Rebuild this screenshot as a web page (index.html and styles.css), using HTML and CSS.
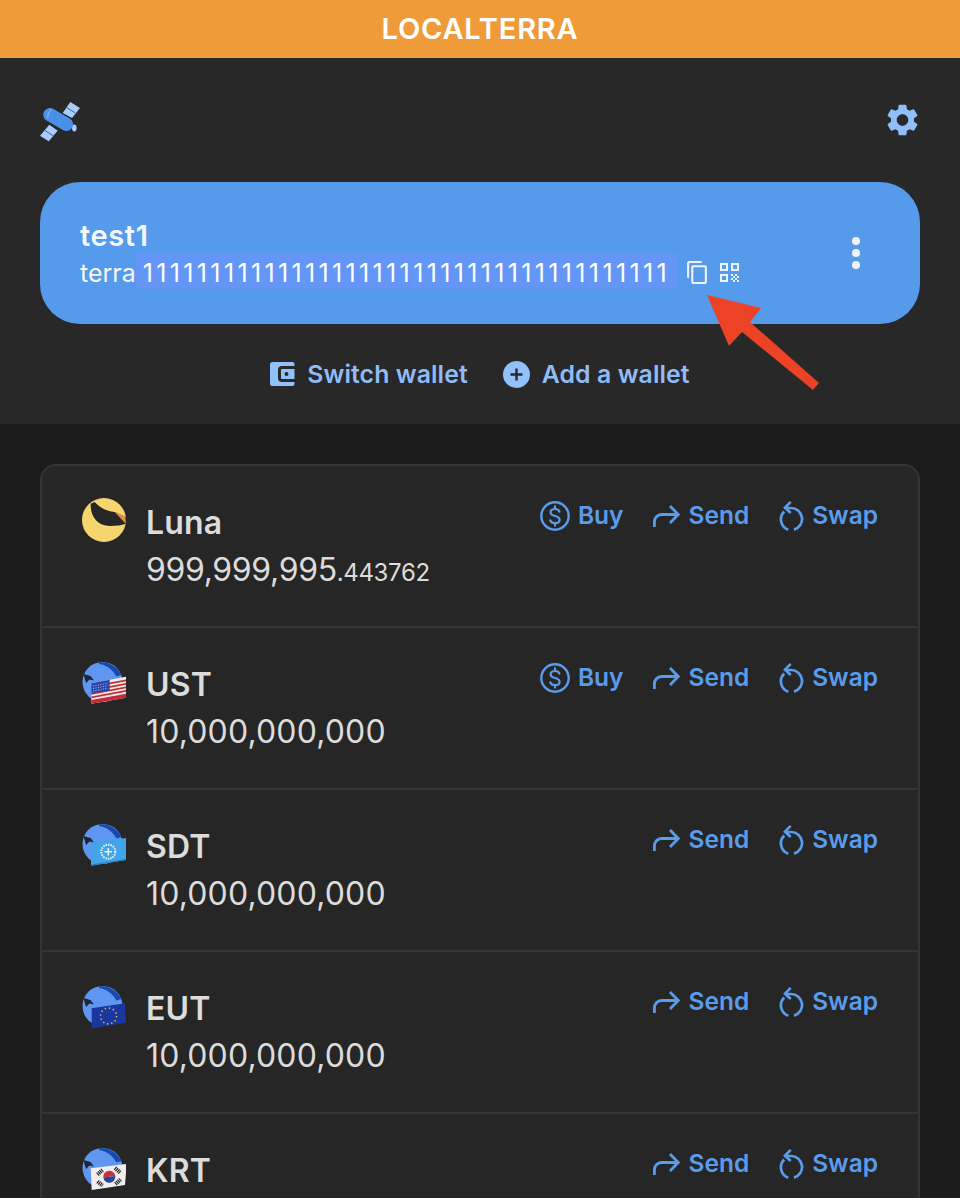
FILE: index.html
```html
<!DOCTYPE html>
<html lang="en">
<head>
<meta charset="utf-8">
<title>Station</title>
<link rel="stylesheet" href="styles.css">
</head>
<body>
<div class="page">
  <svg width="0" height="0" class="defs">
    <defs>
      <symbol id="i-buy" viewBox="0 0 30 30"><circle cx="15" cy="15" r="13.700" fill="none" stroke="currentColor" stroke-width="2.400"/><path d="M19.400 10.600c-.6-1.700-2.300-2.600-4.400-2.600-2.500 0-4.400 1.300-4.400 3.400 0 4.800 9 2.400 9 7.300 0 2.100-2 3.400-4.600 3.400-2.300 0-4.100-1-4.700-2.800M15 5.400V8M15 22v2.600" fill="none" stroke="currentColor" stroke-width="2.200" stroke-linecap="round"/></symbol>
      <symbol id="i-send" viewBox="0 0 28 24"><path d="M2.400 23v-5c0-4 3-7.500 7-7.500h16.500M18 2l8.300 8.500-8.300 8.500" fill="none" stroke="currentColor" stroke-width="2.800"/></symbol>
      <symbol id="i-swap" viewBox="0 0 26 30"><path d="M12.700 .9 7 6.600l5.700 5.300M8 7h5a11 11 0 0 1 3 21.600M6.200 10.500A11 11 0 0 0 10.300 28.700" fill="none" stroke="currentColor" stroke-width="2.700"/></symbol>
      <symbol id="globe" viewBox="0 0 44 44"><circle cx="20.500" cy="22" r="20" fill="#5f96f2"/><path d="M17 2.500C26 1 35 6 39.500 15 37.500 15.500 36 16 34.500 16.500 31 10 25 5 17 4z" fill="#1b48ad"/><path d="M1.500 14 8.500 16 12 20.500 7.500 19.500 4 23z" fill="#1f2630"/></symbol>
    </defs>
  </svg>

  <header class="topbar">LOCALTERRA</header>

  <section class="head">
    <div class="toolbar">
      <svg class="satellite" width="40" height="40" viewBox="0 0 40 40">
        <path d="M30.300 0 40 6 32 16 22.700 11zM9.300 22.700 17.700 28.700 8.700 39.300 0 33.700z" fill="#a6cdfb"/>
        <path d="M26.500 5.500l8.500 5.200M5 28.500l8.500 5.500" stroke="#46617f" stroke-width="1"/>
        <ellipse cx="34.300" cy="26" rx="2.300" ry="3.400" fill="#a6cdfb"/>
        <path d="M10 12.700 26.300 22.300" stroke="#4a90ea" stroke-width="13.500" stroke-linecap="round"/>
        <path d="M11.500 7.500C9 10 7.500 13 7.800 16" fill="none" stroke="#a6cdfb" stroke-width=".8"/>
      </svg>
      <svg class="gear" width="31" height="32" viewBox="2.500 2 19 20"><path d="M19.140 12.940c.04-.3.06-.61.06-.94 0-.32-.02-.64-.07-.94l2.030-1.580a.49.49 0 0 0 .12-.61l-1.920-3.320a.488.488 0 0 0-.59-.22l-2.390.96c-.5-.38-1.030-.7-1.620-.94l-.36-2.540a.484.484 0 0 0-.48-.41h-3.840c-.24 0-.43.17-.47.41l-.36 2.540c-.59.24-1.130.57-1.620.94l-2.390-.96c-.22-.08-.47 0-.59.22L2.740 8.870c-.12.21-.08.47.12.61l2.030 1.580c-.05.3-.09.63-.09.94s.02.64.07.94l-2.030 1.580a.49.49 0 0 0-.12.61l1.920 3.320c.12.22.37.29.59.22l2.390-.96c.5.38 1.030.7 1.620.94l.36 2.540c.05.24.24.41.48.41h3.840c.24 0 .44-.17.47-.41l.36-2.540c.59-.24 1.130-.56 1.620-.94l2.390.96c.22.08.47 0 .59-.22l1.920-3.320c.12-.22.07-.47-.12-.61l-2.010-1.580zM12 15.600c-1.980 0-3.600-1.620-3.600-3.600s1.620-3.600 3.600-3.600 3.600 1.620 3.600 3.600-1.620 3.600-3.600 3.600z" fill="#8fbef9"/></svg>
    </div>

    <div class="wallet">
      <div class="wallet-info">
        <div class="wallet-name">test1</div>
        <div class="wallet-address">
          <span class="prefix">terra</span><span class="selected">111111111111111111111111111111111111111</span>
          <svg class="copy" width="20" height="23" viewBox="2 1 19 22"><path d="M16 1H4c-1.100 0-2 .9-2 2v14h2V3h12V1zm3 4H8c-1.100 0-2 .9-2 2v14c0 1.100.9 2 2 2h11c1.100 0 2-.9 2-2V7c0-1.100-.9-2-2-2zm0 16H8V7h11v14z" fill="#eef4fd"/></svg>
          <svg class="qr" width="19" height="19" viewBox="0 0 19 19"><path d="M0 0h8v8H0zM2 2v4h4V2zM11 0h8v8h-8zM13 2v4h4V2zM0 11h8v8H0zM2 13v4h4v-4z" fill="#eef4fd" fill-rule="evenodd"/><path d="M11 11h2v2h-2zM15 11h2v2h-2zM13 13h2v2h-2zM17 13h2v2h-2zM11 15h2v2h-2zM15 15h2v2h-2zM13 17h2v2h-2zM17 17h2v2h-2z" fill="#eef4fd"/></svg>
        </div>
      </div>
      <div class="dots"><i></i><i></i><i></i></div>
    </div>

    <div class="links">
      <a class="link">
        <svg width="25" height="24" viewBox="0 0 25 24"><path d="M2.500 0h20a2 2 0 0 1 2 2v2H12a4 4 0 0 0-4 4v8a4 4 0 0 0 4 4h12.500v2a2 2 0 0 1-2 2h-20a2.500 2.500 0 0 1-2.500-2.500v-19A2.500 2.500 0 0 1 2.500 0z" fill="#92c0fb"/><path d="M12 7h12.500v10H12a1 1 0 0 1-1-1V8a1 1 0 0 1 1-1zm4.500 3a2 2 0 1 0 0 4 2 2 0 0 0 0-4z" fill="#92c0fb" fill-rule="evenodd"/></svg>
        Switch wallet
      </a>
      <a class="link">
        <svg width="27" height="27" viewBox="0 0 27 27"><circle cx="13.500" cy="13.500" r="13.500" fill="#92c0fb"/><path d="M13.500 7.500v12M7.500 13.500h12" stroke="#282828" stroke-width="2.400"/></svg>
        Add a wallet
      </a>
    </div>
  </section>

  <main class="assets">
    <div class="card">
      <article class="row">
        <svg class="token" viewBox="0 0 44 44"><circle cx="22" cy="22" r="22" fill="#f5d66e"/><path d="M8.700 5.700C8 16 14 28 28 28 34 28 40 27 43.700 25.700L43.700 19 32.700 14C24 13 18 10 12.700 4z" fill="#262626"/><path d="M32.700 14 43 18.500l.7 7.200z" fill="#ec8a3c"/></svg>
        <div class="token-text">
          <div class="symbol">Luna</div>
          <div class="amount amount-tight">999,999,995<small>.443762</small></div>
        </div>
        <div class="actions">
          <a class="action"><svg class="ic-buy"><use href="#i-buy"/></svg>Buy</a>
          <a class="action"><svg class="ic-send"><use href="#i-send"/></svg>Send</a>
          <a class="action"><svg class="ic-swap"><use href="#i-swap"/></svg>Swap</a>
        </div>
      </article>

      <article class="row">
        <svg class="token" viewBox="0 0 44 44">
          <use href="#globe" width="44" height="44"/>
          <path d="M9.300 23.300 44.300 16.700V37.700L9.300 43.700z" fill="#f1ecea"/>
          <path d="M9.300 26 44.300 19.500v1.800L9.300 27.800zM9.300 29.500 44.300 23v1.800L9.300 31.300zM9.300 33 44.300 26.500v1.800L9.300 34.800zM9.300 36.500 44.300 30v1.800L9.300 38.300zM9.300 40 44.300 33.800V37.700L9.300 43.700z" fill="#c32c35"/>
          <path d="M9.300 23.300 27.700 19.800V30.500L9.300 33.500z" fill="#2b46a8"/>
          <path d="M11 26l15-2.800M11 28.500l15-2.800M11 31l15-2.800" stroke="#b6c0ea" stroke-width="1" stroke-dasharray="1 1.500"/>
        </svg>
        <div class="token-text">
          <div class="symbol">UST</div>
          <div class="amount">10,000,000,000</div>
        </div>
        <div class="actions">
          <a class="action"><svg class="ic-buy"><use href="#i-buy"/></svg>Buy</a>
          <a class="action"><svg class="ic-send"><use href="#i-send"/></svg>Send</a>
          <a class="action"><svg class="ic-swap"><use href="#i-swap"/></svg>Swap</a>
        </div>
      </article>

      <article class="row">
        <svg class="token" viewBox="0 0 44 44">
          <use href="#globe" width="44" height="44"/>
          <path d="M9 21 44 16V38L9 43.700z" fill="#42a5e8"/>
          <path d="M9 42.500 44 37v1L9 43.700z" fill="#2a7fc0"/>
          <circle cx="26.300" cy="29.700" r="7" fill="none" stroke="#e6f3fb" stroke-width="2" stroke-dasharray="1.500 1"/>
          <path d="M22.500 29.700h7.600M26.300 26v7.500" stroke="#e6f3fb" stroke-width="1.500"/>
        </svg>
        <div class="token-text">
          <div class="symbol">SDT</div>
          <div class="amount">10,000,000,000</div>
        </div>
        <div class="actions">
          <a class="action"><svg class="ic-send"><use href="#i-send"/></svg>Send</a>
          <a class="action"><svg class="ic-swap"><use href="#i-swap"/></svg>Swap</a>
        </div>
      </article>

      <article class="row">
        <svg class="token" viewBox="0 0 44 44">
          <use href="#globe" width="44" height="44"/>
          <path d="M9.700 24.300 43 19.300 44 38.700 9.700 44.300z" fill="#1a37a0"/>
          <circle cx="26.500" cy="32" r="8" fill="none" stroke="#e0b94d" stroke-width="1.500" stroke-dasharray="1.500 2.690"/>
        </svg>
        <div class="token-text">
          <div class="symbol">EUT</div>
          <div class="amount">10,000,000,000</div>
        </div>
        <div class="actions">
          <a class="action"><svg class="ic-send"><use href="#i-send"/></svg>Send</a>
          <a class="action"><svg class="ic-swap"><use href="#i-swap"/></svg>Swap</a>
        </div>
      </article>

      <article class="row">
        <svg class="token" viewBox="0 0 44 44">
          <use href="#globe" width="44" height="44"/>
          <path d="M8.700 22.300 44.700 18 43 39 9.700 44z" fill="#f2eeee"/>
          <path d="M21.300 31.500a6 6 0 0 1 12-1.500z" fill="#c8303c"/>
          <path d="M21.300 31.500a6 6 0 0 0 12-1.500z" fill="#1f46a0"/>
          <path d="M15.500 28.500l5-4.500M33 22l5 4.500M15.500 35.500l5 4M33.500 38l5-4.500" stroke="#222" stroke-width="4" stroke-dasharray="1.200 .7"/>
        </svg>
        <div class="token-text">
          <div class="symbol">KRT</div>
        </div>
        <div class="actions">
          <a class="action"><svg class="ic-send"><use href="#i-send"/></svg>Send</a>
          <a class="action"><svg class="ic-swap"><use href="#i-swap"/></svg>Swap</a>
        </div>
      </article>
    </div>
  </main>

  <svg class="pointer" width="120" height="100" viewBox="0 0 120 100"><path d="M7 5 61 18 50 32 119 93 113 100 42 42 29 56z" fill="#ec4225"/></svg>
</div>
</body>
</html>
```
FILE: styles.css
```css
* { box-sizing: border-box; }
html, body { margin: 0; padding: 0; }
body { background: #1b1b1b; font-family: Inter, "Liberation Sans", sans-serif; overflow: hidden; }
.page { position: relative; width: 960px; height: 1198px; overflow: hidden; }
.defs { position: absolute; }

.topbar { height: 58px; background: #f09b39; color: #fff; font-size: 29px; font-weight: 600; line-height: 58px; text-align: center; letter-spacing: .8px; }

.head { height: 366px; background: #282828; padding: 44px 40px 0; }
.toolbar { display: flex; justify-content: space-between; align-items: flex-start; height: 40px; }
.gear { margin-right: 2px; margin-top: 2px; }

.wallet { height: 142px; margin-top: 40px; padding: 0 60px 0 40px; background: #569aec; border-radius: 40px; display: flex; align-items: center; justify-content: space-between; color: #f4f7fb; }
.wallet-info { display: flex; flex-direction: column; }
.wallet-name { height: 36px; font-size: 29px; font-weight: 600; line-height: 38px; letter-spacing: .6px; }
.wallet-address { display: flex; align-items: center; height: 36px; font-size: 25px; }
.prefix, .selected { height: 36px; line-height: 40px; }
.selected { background: #6496f8; padding: 0 7px 0 7px; color: #fff; letter-spacing: 3.350px; }
.copy { margin-left: 10px; margin-top: 3px; }
.qr { margin-left: 13px; margin-top: 3px; }
.dots { display: flex; flex-direction: column; gap: 4px; }
.dots i { display: block; width: 8px; height: 8px; border-radius: 50%; background: #f0f4fa; }

.links { display: flex; justify-content: center; gap: 35px; margin-top: 32px; height: 36px; align-items: center; }
.link { display: flex; align-items: center; gap: 12px; color: #8fbcf8; font-size: 24.800px; font-weight: 600; letter-spacing: .1px; }

.assets { padding: 40px 40px 0; }
.card { background: #262626; border: 2px solid #353535; border-radius: 16px; }
.row { display: flex; height: 162px; padding: 32px 40px 0; border-bottom: 2px solid #353535; align-items: flex-start; }
.token { width: 44px; height: 44px; flex: none; }
.token-text { margin: 3px 0 0 20px; }
.symbol { color: #dcdcdc; font-size: 32px; font-weight: 600; line-height: 44px; letter-spacing: .2px; }
.amount { color: #dcdcdc; font-size: 32px; font-weight: 400; line-height: 44px; margin-top: 3px; letter-spacing: .15px; }
.amount-tight { letter-spacing: -.35px; }
.amount small { font-size: 24px; }

.actions { margin-left: auto; display: flex; gap: 29px; align-items: center; height: 34px; }
.action { display: flex; align-items: center; gap: 8px; color: #5a9cec; font-size: 24.500px; font-weight: 600; }
.action svg { margin-top: 2px; }
.ic-buy { width: 30px; height: 30px; }
.ic-send { width: 28px; height: 24px; }
.ic-swap { width: 26px; height: 30px; }

.pointer { position: absolute; left: 700px; top: 290px; }
```
